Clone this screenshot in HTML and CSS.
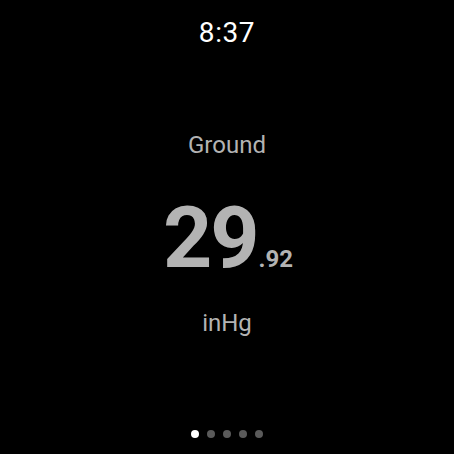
FILE: index.html
```html
<!DOCTYPE html>
<html lang="en">
<head>
  <meta charset="UTF-8" />
  <meta name="viewport" content="width=device-width, initial-scale=1.0"/>
  <title>Altimeter</title>
  <link rel="stylesheet" href="styles.css">
</head>
<body>
  <div class="watch">
    <div class="clock">8:37</div>

    <div class="reading">
      <div class="label">Ground</div>
      <div class="value"><span class="whole">29</span><span class="fraction">.92</span></div>
      <div class="unit">inHg</div>
    </div>

    <div class="pager">
      <span class="dot active"></span>
      <span class="dot"></span>
      <span class="dot"></span>
      <span class="dot"></span>
      <span class="dot"></span>
    </div>
  </div>
</body>
</html>
```

FILE: styles.css
```css
html, body {
  margin: 0;
  background: #000;
}
body {
  font-family: Roboto, "Noto Sans", sans-serif;
  color: #b3b3b3;
}
.watch {
  width: 454px;
  height: 454px;
  display: flex;
  flex-direction: column;
  align-items: center;
}
.clock {
  margin-top: 14px;
  font-size: 28px;
  color: #fff;
  line-height: 38px;
  letter-spacing: 0.6px;
}
.reading {
  flex: 1;
  display: flex;
  flex-direction: column;
  align-items: center;
  padding-top: 79px;
}
.label, .unit {
  font-size: 24px;
  line-height: 28px;
}
.value {
  display: flex;
  align-items: baseline;
  margin: 34px 0 5px 2px;
  line-height: 90px;
  font-weight: 700;
}
.whole {
  font-size: 86px;
  letter-spacing: -2px;
}
.fraction {
  font-size: 24px;
  margin-left: 1px;
}
.pager {
  display: flex;
  gap: 8px;
  margin-bottom: 16px;
}
.dot {
  width: 8px;
  height: 8px;
  border-radius: 50%;
  background: #5a5a5a;
}
.dot.active {
  background: #fff;
}
```
